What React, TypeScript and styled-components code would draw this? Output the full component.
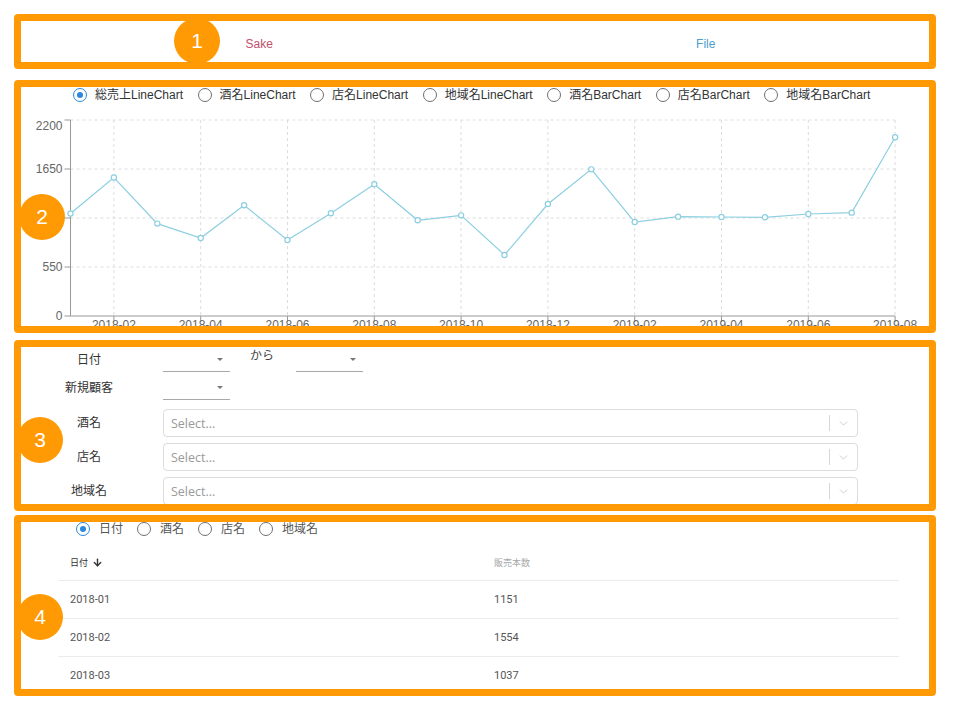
import React from 'react'
import styled, { createGlobalStyle } from 'styled-components'
import { ArrowDown, ChevronDown } from 'lucide-react'

const GlobalStyle = createGlobalStyle`
  body {
    margin: 0;
    background: #fff;
    font-family: 'Liberation Sans', 'Noto Sans CJK JP', sans-serif;
  }
`

const ORANGE = '#ff9a05'

const Page = styled.div`
  width: 922px;
  padding: 14px 0 0 14px;
`

const Frame = styled.div<{ $gap: number }>`
  position: relative;
  margin-top: ${({ $gap }) => $gap}px;
`

const Panel = styled.section<{ $h: number }>`
  box-sizing: border-box;
  height: ${({ $h }) => $h}px;
  border: 7px solid ${ORANGE};
  border-radius: 4px;
  overflow: hidden;
  background: #fff;
`

const Badge = styled.div<{ $x: number; $y: number }>`
  position: absolute;
  left: ${({ $x }) => $x}px;
  top: ${({ $y }) => $y}px;
  width: 46px;
  height: 46px;
  border-radius: 50%;
  background: ${ORANGE};
  color: #fff;
  font-size: 21px;
  display: flex;
  align-items: center;
  justify-content: center;
  z-index: 2;
`

/* 1: tabs */
const Tabs = styled.div`
  display: flex;
  height: 100%;
`

const Tab = styled.div<{ $color: string; $shift: number }>`
  flex: 1;
  display: flex;
  align-items: center;
  justify-content: center;
  padding: 5px 0 0 ${({ $shift }) => $shift}px;
  font-size: 12px;
  color: ${({ $color }) => $color};
`

/* radios */
const RadioRow = styled.div<{ $pad: number; $gap: number; $top: number }>`
  display: flex;
  align-items: center;
  gap: ${({ $gap }) => $gap}px;
  height: 16px;
  margin-top: ${({ $top }) => $top}px;
  padding-left: ${({ $pad }) => $pad}px;
`

const RadioItem = styled.label<{ $gap: number; $color: string }>`
  display: flex;
  align-items: center;
  gap: ${({ $gap }) => $gap}px;
  font-size: 12px;
  line-height: 16px;
  color: ${({ $color }) => $color};
  white-space: nowrap;
`

const RadioDot = styled.span<{ $checked?: boolean }>`
  box-sizing: border-box;
  width: 14px;
  height: 14px;
  border-radius: 50%;
  border: 1.5px solid ${({ $checked }) => ($checked ? '#2b88dd' : '#6f6f6f')};
  display: flex;
  align-items: center;
  justify-content: center;

  &::after {
    content: '';
    width: 6px;
    height: 6px;
    border-radius: 50%;
    background: ${({ $checked }) => ($checked ? '#2b88dd' : 'transparent')};
  }
`

/* 2: chart */
const ChartSvg = styled.svg`
  display: block;
  font-family: 'Liberation Sans', sans-serif;
`

/* 3: filters */
const FilterGrid = styled.div`
  display: grid;
  grid-template-columns: 136px 695px;
  column-gap: 6px;
  row-gap: 4px;
  padding-top: 1px;
`

const FieldLabel = styled.div`
  font-size: 12px;
  color: #333;
  text-align: center;
  line-height: 24px;
`

const InlineFields = styled.div`
  display: flex;
  align-items: flex-start;
`

const DateSelect = styled.div`
  box-sizing: border-box;
  width: 67px;
  height: 24px;
  border-bottom: 1px solid #a8a8a8;
  display: flex;
  align-items: center;
  justify-content: flex-end;
  padding-right: 7px;

  &::after {
    content: '';
    border-left: 3.5px solid transparent;
    border-right: 3.5px solid transparent;
    border-top: 3.5px solid #777;
  }
`

const Kara = styled.span`
  font-size: 12px;
  color: #444;
  line-height: 16px;
  margin: 0 22px 0 20px;
`

const SelectBox = styled.div<{ $first?: boolean }>`
  box-sizing: border-box;
  height: 28px;
  border: 1px solid #dcdcdc;
  border-radius: 4px;
  display: flex;
  align-items: center;
  margin-top: ${({ $first }) => ($first ? 5 : 2)}px;
`

const SelectRowLabel = styled(FieldLabel)<{ $first?: boolean }>`
  line-height: 28px;
  margin-top: ${({ $first }) => ($first ? 5 : 2)}px;
`

const Placeholder = styled.span`
  flex: 1;
  padding-left: 7px;
  font-family: 'Open Sans', sans-serif;
  font-size: 12.5px;
  color: #9a9a9a;
`

const Separator = styled.span`
  width: 1px;
  height: 16px;
  background: #d6d6d6;
`

const Indicator = styled.span`
  width: 27px;
  display: flex;
  justify-content: center;
  color: #c4c4c4;
`

/* 4: table */
const Table = styled.div`
  width: 841px;
  margin: 7px 0 0 37px;
  font-family: Roboto, 'Liberation Sans', 'Noto Sans CJK JP', sans-serif;
`

const Row = styled.div<{ $head?: boolean }>`
  display: grid;
  grid-template-columns: 424px 1fr;
  height: ${({ $head }) => ($head ? 36 : 37)}px;
  border-bottom: 1px solid #ececec;
  align-items: center;
`

const Cell = styled.div<{ $head?: boolean; $muted?: boolean }>`
  padding-left: 12px;
  display: flex;
  align-items: center;
  gap: 4px;
  font-size: ${({ $head }) => ($head ? 9 : 11)}px;
  color: ${({ $muted, $head }) => ($muted ? '#a8a8a8' : $head ? '#333' : '#555')};
`

const sales = [
  1151, 1554, 1037, 875, 1243, 853, 1153, 1478, 1074, 1130, 685, 1257, 1646, 1055, 1115, 1111,
  1108, 1145, 1160, 2006
]
const months = sales.map((_, i) => {
  const y = 2018 + Math.floor(i / 12)
  const m = (i % 12) + 1
  return `${y}-${String(m).padStart(2, '0')}`
})

const X = (i: number) => 49.5 + i * 43.4
const Y = (v: number) => 213 - (v * 196) / 2200

// the 1100 label sits under badge 2 in the screenshot, so it is left out
const labelledTicks = [0, 550, 1650, 2200]

function SalesChart() {
  const left = X(0)
  const right = X(sales.length - 1)
  const ticks = [0, 550, 1100, 1650, 2200]
  const xTicks = months.map((m, i) => ({ m, i })).filter(({ i }) => i % 2 === 1)
  const points = sales.map((v, i) => `${X(i)},${Y(v)}`).join(' ')
  return (
    <ChartSvg width={908} height={240}>
      {ticks.slice(1).map((t) => (
        <line key={t} x1={left} x2={right} y1={Y(t)} y2={Y(t)} stroke="#ddd" strokeDasharray="3 3" />
      ))}
      {xTicks.map(({ i }) => (
        <line key={i} x1={X(i)} x2={X(i)} y1={Y(2200)} y2={Y(0)} stroke="#ddd" strokeDasharray="3 3" />
      ))}
      <line x1={left} x2={left} y1={Y(2200)} y2={Y(0)} stroke="#999" />
      <line x1={left} x2={right} y1={Y(0)} y2={Y(0)} stroke="#999" />
      {ticks.map((t) => (
        <line key={t} x1={left - 6} x2={left} y1={Y(t)} y2={Y(t)} stroke="#999" />
      ))}
      {labelledTicks.map((t) => (
        <text
          key={t}
          x={left - 8}
          y={Y(t) + (t === 2200 ? 6 : 0)}
          dy="0.35em"
          textAnchor="end"
          fontSize={12}
          fill="#666"
        >
          {t}
        </text>
      ))}
      {xTicks.map(({ m, i }) => (
        <g key={m}>
          <line x1={X(i)} x2={X(i)} y1={Y(0)} y2={Y(0) + 6} stroke="#999" />
          <text x={X(i)} y={226} textAnchor="middle" fontSize={12} fill="#666">
            {m}
          </text>
        </g>
      ))}
      <polyline points={points} fill="none" stroke="#8ccfe0" strokeWidth={1.2} />
      {sales.map((v, i) => (
        <circle key={i} cx={X(i)} cy={Y(v)} r={2.6} fill="#fff" stroke="#8ccfe0" strokeWidth={1.2} />
      ))}
    </ChartSvg>
  )
}

const chartOptions = [
  '総売上LineChart',
  '酒名LineChart',
  '店名LineChart',
  '地域名LineChart',
  '酒名BarChart',
  '店名BarChart',
  '地域名BarChart'
]
const groupOptions = ['日付', '酒名', '店名', '地域名']
const selectFields = ['酒名', '店名', '地域名']

function Select({ first }: { first?: boolean }) {
  return (
    <SelectBox $first={first}>
      <Placeholder>Select...</Placeholder>
      <Separator />
      <Indicator>
        <ChevronDown size={13} strokeWidth={1.5} />
      </Indicator>
    </SelectBox>
  )
}

export default function App() {
  return (
    <Page>
      <GlobalStyle />

      <Frame $gap={0}>
        <Panel $h={55}>
          <Tabs>
            <Tab $color="#c0506b" $shift={15}>Sake</Tab>
            <Tab $color="#4a9ed0" $shift={0}>File</Tab>
          </Tabs>
        </Panel>
        <Badge $x={160} $y={4}>1</Badge>
      </Frame>

      <Frame $gap={11}>
        <Panel $h={253}>
          <RadioRow $pad={52} $gap={14.5} $top={0}>
            {chartOptions.map((o, i) => (
              <RadioItem key={o} $gap={8} $color="#333">
                <RadioDot $checked={i === 0} />
                {o}
              </RadioItem>
            ))}
          </RadioRow>
          <SalesChart />
        </Panel>
        <Badge $x={5} $y={114}>2</Badge>
      </Frame>

      <Frame $gap={7}>
        <Panel $h={171}>
          <FilterGrid>
            <FieldLabel>日付</FieldLabel>
            <InlineFields>
              <DateSelect />
              <Kara>から</Kara>
              <DateSelect />
            </InlineFields>
            <FieldLabel>新規顧客</FieldLabel>
            <InlineFields>
              <DateSelect />
            </InlineFields>
            {selectFields.map((f, i) => (
              <React.Fragment key={f}>
                <SelectRowLabel $first={i === 0}>{f}</SelectRowLabel>
                <Select first={i === 0} />
              </React.Fragment>
            ))}
          </FilterGrid>
        </Panel>
        <Badge $x={3} $y={77}>3</Badge>
      </Frame>

      <Frame $gap={4}>
        <Panel $h={181}>
          <RadioRow $pad={55} $gap={14} $top={-1}>
            {groupOptions.map((o, i) => (
              <RadioItem key={o} $gap={9} $color="#555">
                <RadioDot $checked={i === 0} />
                {o}
              </RadioItem>
            ))}
          </RadioRow>
          <Table>
            <Row $head>
              <Cell $head>
                日付
                <ArrowDown size={11} strokeWidth={3} />
              </Cell>
              <Cell $head $muted>
                販売本数
              </Cell>
            </Row>
            {sales.slice(0, 3).map((v, i) => (
              <Row key={months[i]}>
                <Cell>{months[i]}</Cell>
                <Cell>{v}</Cell>
              </Row>
            ))}
          </Table>
        </Panel>
        <Badge $x={3} $y={79}>4</Badge>
      </Frame>
    </Page>
  )
}
